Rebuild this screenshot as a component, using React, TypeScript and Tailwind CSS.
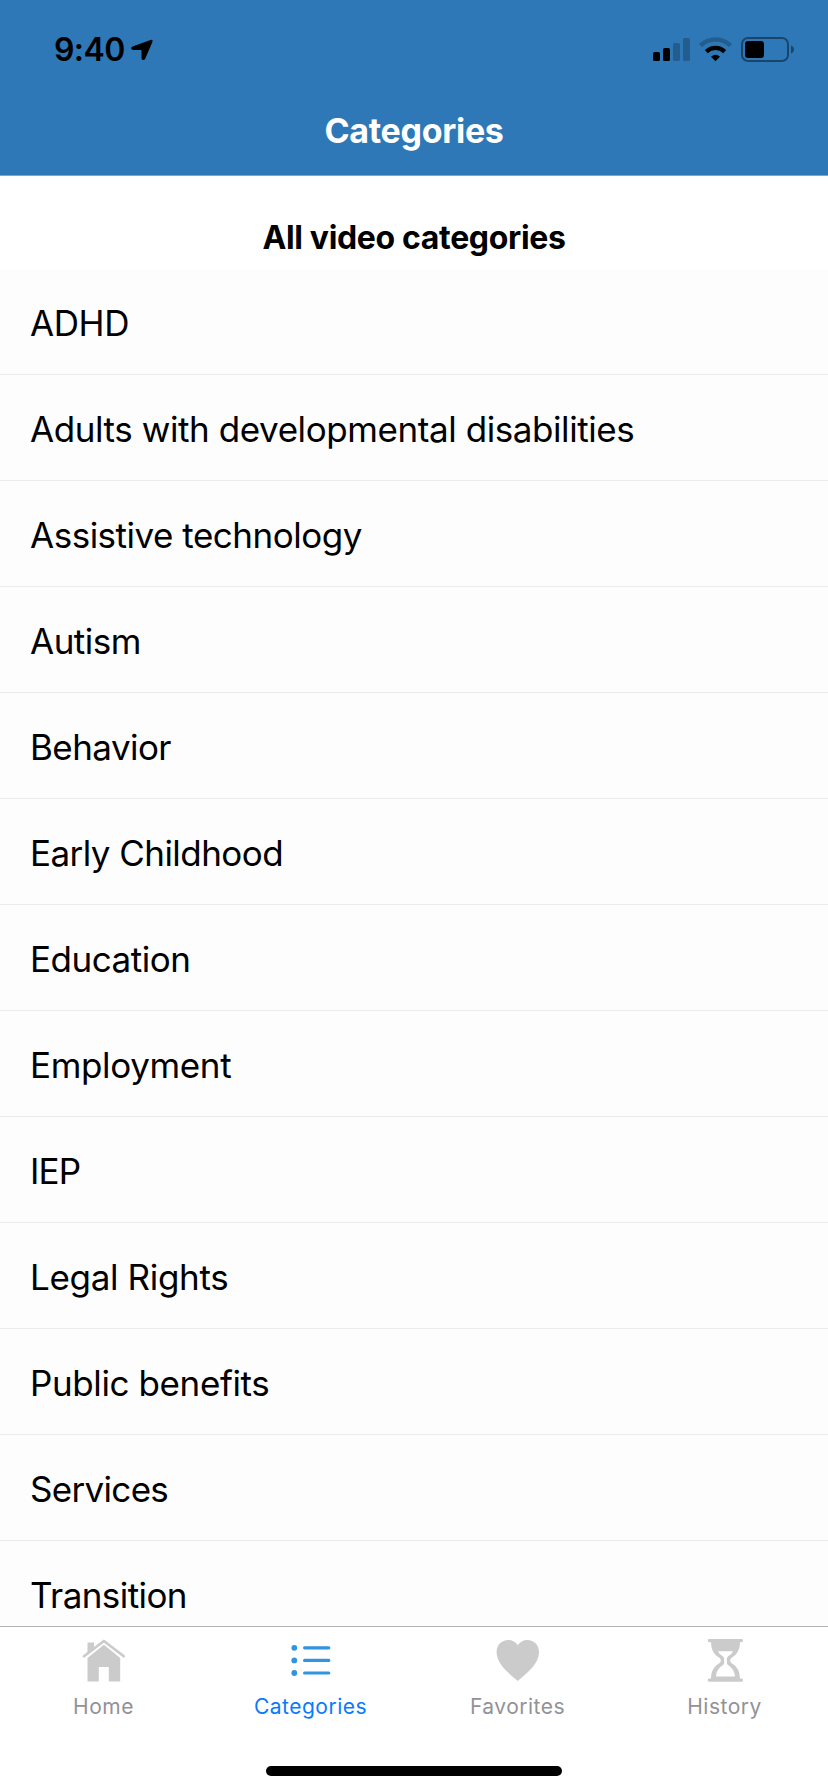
import type { ReactNode } from "react";

type Category = { name: string; tracking: string };

const categories: Category[] = [
  { name: "ADHD", tracking: "tracking-[-0.4px]" },
  { name: "Adults with developmental disabilities", tracking: "tracking-[-0.42px]" },
  { name: "Assistive technology", tracking: "tracking-[-0.49px]" },
  { name: "Autism", tracking: "tracking-[-0.5px]" },
  { name: "Behavior", tracking: "tracking-[-0.56px]" },
  { name: "Early Childhood", tracking: "tracking-[-0.55px]" },
  { name: "Education", tracking: "tracking-[-0.48px]" },
  { name: "Employment", tracking: "tracking-[-0.35px]" },
  { name: "IEP", tracking: "tracking-[-0.8px]" },
  { name: "Legal Rights", tracking: "tracking-[-0.34px]" },
  { name: "Public benefits", tracking: "tracking-[-0.39px]" },
  { name: "Services", tracking: "tracking-[-0.68px]" },
  { name: "Transition", tracking: "tracking-[-0.57px]" },
];

function StatusBar() {
  return (
    <div className="flex h-[88px] items-start justify-between pt-[36px] pr-[33px] pl-[54px]">
      <div className="flex items-start">
        <span className="mt-[-4px] w-[70px] text-[32px] leading-[36px] font-semibold tracking-[-0.6px] whitespace-nowrap">9:40</span>
        <svg className="mt-[3px] ml-[7px]" width="23" height="22" viewBox="0 0 23 22">
          <path
            d="M1.500 7.500 19.500 1Q22.300.3 21.400 3L14.300 19.600Q13.600 21.200 12.300 21.100 10.500 21 10.500 19.300V11.800Q10.500 11.100 9.800 11.100L2.200 11Q.4 10.800.2 9.400.2 8.100 1.500 7.500Z"
            fill="#000"
          />
        </svg>
      </div>
      <svg width="144" height="28" viewBox="651 36 144 28">
        <rect x="653" y="52" width="7" height="9" rx="1.6" />
        <rect x="663" y="48" width="7" height="13" rx="1.6" />
        <rect x="673" y="43" width="7" height="18" rx="1.6" opacity="0.22" />
        <rect x="683" y="38" width="7" height="23" rx="1.6" opacity="0.22" />
        <path d="M700.5 45.600a21.500 21.500 0 0 1 30 0" fill="none" stroke="#000" strokeWidth="4.6" opacity="0.22" />
        <path d="M706.3 51.600a13.400 13.400 0 0 1 18.400 0" fill="none" stroke="#000" strokeWidth="4.2" />
        <path d="M711 56.700q4.500-4 9 0l-4.500 4.600Z" />
        <rect x="742" y="38" width="46" height="23" rx="6" fill="none" stroke="#000" strokeWidth="2" opacity="0.42" />
        <rect x="745" y="41" width="19" height="17" rx="3" />
        <path d="M791 45.500q3 1.200 3 4t-3 4Z" opacity="0.42" />
      </svg>
    </div>
  );
}

function HomeIcon() {
  return (
    <svg width="44" height="44" viewBox="0 0 44 44" fill="#cbcbcb">
      <path d="M5.500 3.500h6.500v5.600L5.500 14.200Z" />
      <path d="m2 17.300 19.900-15.300 19.900 15.300" fill="none" stroke="#cbcbcb" strokeWidth="2.700" strokeLinecap="round" strokeLinejoin="round" />
      <path d="M21.900 5.800 38.200 19V42.600H26.800V28H16.800v14.600H5.500V19Z" />
    </svg>
  );
}

function ListIcon() {
  return (
    <svg width="44" height="44" viewBox="0 0 44 44" stroke="#3194e0" strokeWidth="3.200" strokeLinecap="round">
      <path d="M15.600 8.800h24.200M15.600 21.400h24.200M15.600 34h24.200" />
      <g fill="#3194e0" stroke="none">
        <circle cx="5.300" cy="8.800" r="2.900" />
        <circle cx="5.300" cy="21.400" r="2.900" />
        <circle cx="5.300" cy="34" r="2.900" />
      </g>
    </svg>
  );
}

function HeartIcon() {
  return (
    <svg width="44" height="44" viewBox="0 0 44 44" fill="#cbcbcb">
      <path d="M21.800 6.200C23.900 3 27.200 1 31.200 1 37.900 1 43 5.900 43 13 43 24 33.700 32 21.800 42 9.900 32 .6 24 .6 13 .6 5.900 5.700 1 12.400 1c4 0 7.300 2 9.400 5.200Z" />
    </svg>
  );
}

function HourglassIcon() {
  return (
    <svg width="44" height="44" viewBox="0 0 44 44">
      <rect x="4.800" y="0" width="35.200" height="3.200" rx="1.400" fill="#cbcbcb" />
      <rect x="4.800" y="39.500" width="35.200" height="3.200" rx="1.400" fill="#cbcbcb" />
      <path
        d="M8 2.500H37C37 11 34 15.500 29 18.500 26.500 20.200 26.500 22.800 29 24.500 34.500 28 37 32.500 37 40.500H8C8 32.500 10.500 28 16 24.500 18.500 22.800 18.500 20.200 16 18.500 11 15.500 8 11 8 2.500Z"
        fill="#cbcbcb"
      />
      <path
        d="M15 12.200H30Q29.300 14.500 25.500 17 23.900 18.200 23.900 20V24.500C23.900 26.500 31.500 28 32 37.500H13C13.500 28 21.100 26.500 21.100 24.500V20Q21.100 18.200 19.500 17 15.700 14.500 15 12.200Z"
        fill="#fff"
      />
    </svg>
  );
}

type Tab = { label: string; icon: ReactNode; tone: string };

const tabs: Tab[] = [
  { label: "Home", icon: <HomeIcon />, tone: "text-[#929297]" },
  { label: "Categories", icon: <ListIcon />, tone: "text-[#087aff]" },
  { label: "Favorites", icon: <HeartIcon />, tone: "text-[#929297]" },
  { label: "History", icon: <HourglassIcon />, tone: "text-[#929297]" },
];

export default function App() {
  return (
    <div className="flex h-[1792px] w-[828px] flex-col overflow-hidden bg-white font-['Inter',sans-serif] text-black">
      <header className="h-[176px] shrink-0 border-b border-[#94a0ad] bg-[#2e78b7]">
        <StatusBar />
        <h1 className="pt-[22px] text-center text-[34px] leading-[42px] font-bold tracking-[-0.3px] text-white">Categories</h1>
      </header>
      <main className="flex min-h-0 flex-1 flex-col overflow-hidden">
        <h2 className="h-[93px] shrink-0 pt-[42px] text-center text-[32px] leading-[40px] font-bold tracking-[-0.35px]">
          All video categories
        </h2>
        <ul className="bg-[#fdfdfd]">
          {categories.map(({ name, tracking }) => (
            <li key={name} className="flex h-[106px] items-center border-b border-[#ebebeb] pt-[3px] pl-[30px] text-[35px]">
              <span className={tracking}>{name}</span>
            </li>
          ))}
        </ul>
      </main>
      <nav className="h-[166px] shrink-0 border-t border-[#b2b2b2] bg-white">
        <div className="grid grid-cols-4">
          {tabs.map(({ label, icon, tone }) => (
            <div key={label} className={`flex flex-col items-center pt-[12px] ${tone}`}>
              {icon}
              <span className="mt-[10px] text-[21px] leading-[28px] tracking-[0.5px]">{label}</span>
            </div>
          ))}
        </div>
        <div className="mx-auto mt-[45px] h-[10px] w-[296px] rounded-full bg-black" />
      </nav>
    </div>
  );
}
